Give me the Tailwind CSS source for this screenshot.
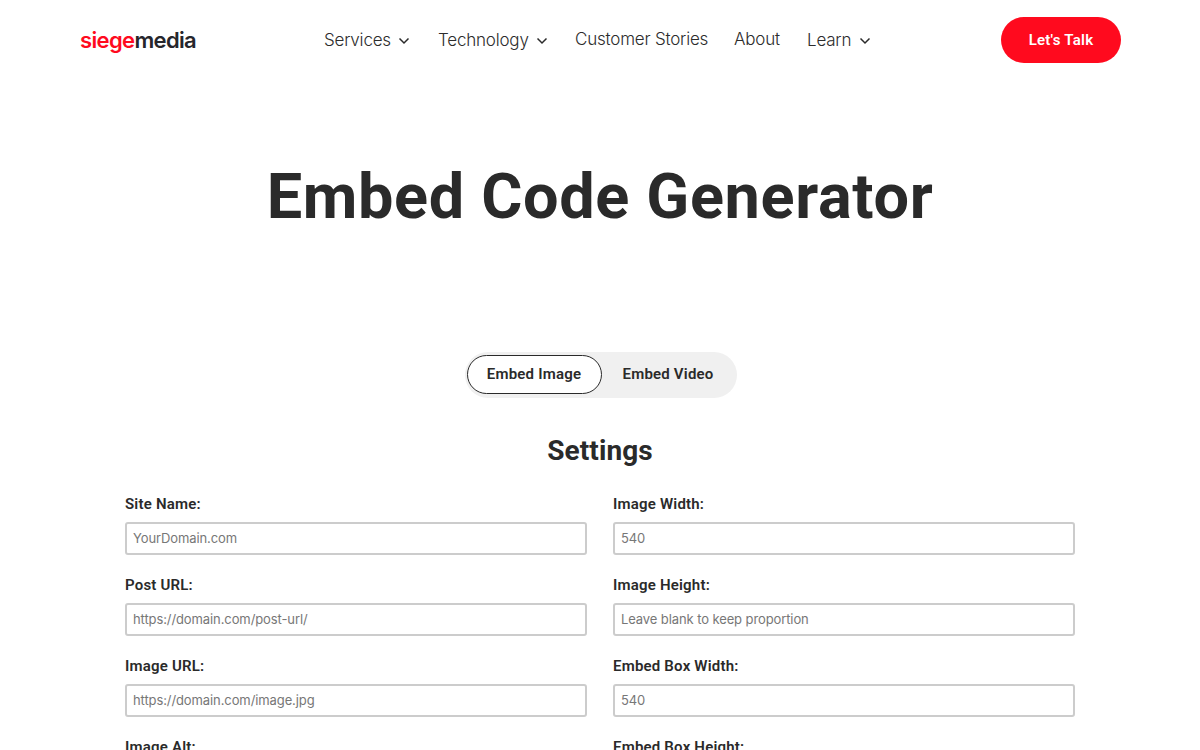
<!DOCTYPE html>
<html lang="en">
<head>
<meta charset="utf-8">
<title>Embed Code Generator</title>
<script src="https://cdn.jsdelivr.net/npm/@tailwindcss/browser@4"></script>
</head>
<body class="bg-white text-[#2a2a2a] font-['Roboto',sans-serif] h-[750px] overflow-hidden">

<!-- header -->
<header class="flex items-center h-[80px] pl-[80px] pr-[79px] font-['Inter',sans-serif]">
  <a class="w-[244px] text-[22px] font-semibold tracking-[-0.65px] leading-none"><span class="text-[#ff0a1e]">siege</span><span class="text-[#26262b]">media</span></a>
  <nav class="flex items-center text-[17px] font-light text-[#2c2c2c] tracking-[-0.2px] mt-[2px]">
    <a class="flex items-center w-[114px]">Services
      <svg class="ml-[7px] w-[12px] h-[8px]" viewBox="0 0 12 8" fill="none" stroke="#2a2a2a" stroke-width="1.5"><path d="M1.5 1.5 6 6l4.500-4.500"/></svg>
    </a>
    <a class="flex items-center w-[137px]">Technology
      <svg class="ml-[7px] w-[12px] h-[8px]" viewBox="0 0 12 8" fill="none" stroke="#2a2a2a" stroke-width="1.5"><path d="M1.5 1.5 6 6l4.500-4.500"/></svg>
    </a>
    <a class="w-[159px] -mt-[2px]">Customer Stories</a>
    <a class="w-[73px] -mt-[2px]">About</a>
    <a class="flex items-center">Learn
      <svg class="ml-[8px] w-[12px] h-[8px]" viewBox="0 0 12 8" fill="none" stroke="#2a2a2a" stroke-width="1.5"><path d="M1.5 1.5 6 6l4.500-4.500"/></svg>
    </a>
  </nav>
  <a class="ml-auto w-[120px] h-[46px] flex items-center justify-center rounded-full bg-[#ff0a1e] text-white text-[15px] font-semibold font-['Roboto',sans-serif] tracking-[0.25px]">Let's Talk</a>
</header>

<main>
  <h1 class="mt-[77px] text-center text-[63px] leading-[80px] font-bold text-[#2a2a2a] tracking-[0.65px]">Embed Code Generator</h1>

  <!-- tabs -->
  <div class="mt-[115px] flex justify-center">
    <div class="flex items-center w-[272px] h-[46px] rounded-full bg-[#f0f0f0] pl-[2px] ml-[1px] text-[15px] font-semibold">
      <button class="w-[135px] h-[39px] rounded-full bg-white border border-[#2a2a2a] tracking-[0.2px] -mt-[1px]">Embed Image</button>
      <button class="ml-[21px] -mt-[2px] tracking-[0.2px]">Embed Video</button>
    </div>
  </div>

  <h2 class="mt-[35px] text-center text-[28px] leading-[36px] font-bold tracking-[0.1px]">Settings</h2>

  <!-- form -->
  <form class="mt-[25px] mx-[125px] grid grid-cols-2 gap-x-[26px] gap-y-[20px]">
    <label class="block">
      <span class="block text-[15px] leading-[20px] font-semibold tracking-[0.2px]">Site Name:</span>
      <input class="mt-[8px] w-full h-[33px] pl-[6px] pr-[6px] pb-[2px] border-2 border-[#cccccc] rounded-[3px] text-[13px] tracking-[-0.1px] font-['Inter',sans-serif] placeholder:text-[#777777]" placeholder="YourDomain.com">
    </label>
    <label class="block">
      <span class="block text-[15px] leading-[20px] font-semibold tracking-[0.2px]">Image Width:</span>
      <input class="mt-[8px] w-full h-[33px] pl-[6px] pr-[6px] pb-[2px] border-2 border-[#cccccc] rounded-[3px] text-[13px] tracking-[-0.1px] font-['Inter',sans-serif] placeholder:text-[#777777]" placeholder="540">
    </label>
    <label class="block">
      <span class="block text-[15px] leading-[20px] font-semibold tracking-[0.2px]">Post URL:</span>
      <input class="mt-[8px] w-full h-[33px] pl-[6px] pr-[6px] pb-[2px] border-2 border-[#cccccc] rounded-[3px] text-[13px] tracking-[-0.1px] font-['Inter',sans-serif] placeholder:text-[#777777]" placeholder="https://domain.com/post-url/">
    </label>
    <label class="block">
      <span class="block text-[15px] leading-[20px] font-semibold tracking-[0.2px]">Image Height:</span>
      <input class="mt-[8px] w-full h-[33px] pl-[6px] pr-[6px] pb-[2px] border-2 border-[#cccccc] rounded-[3px] text-[13px] tracking-[-0.1px] font-['Inter',sans-serif] placeholder:text-[#777777]" placeholder="Leave blank to keep proportion">
    </label>
    <label class="block">
      <span class="block text-[15px] leading-[20px] font-semibold tracking-[0.2px]">Image URL:</span>
      <input class="mt-[8px] w-full h-[33px] pl-[6px] pr-[6px] pb-[2px] border-2 border-[#cccccc] rounded-[3px] text-[13px] tracking-[-0.1px] font-['Inter',sans-serif] placeholder:text-[#777777]" placeholder="https://domain.com/image.jpg">
    </label>
    <label class="block">
      <span class="block text-[15px] leading-[20px] font-semibold tracking-[0.2px]">Embed Box Width:</span>
      <input class="mt-[8px] w-full h-[33px] pl-[6px] pr-[6px] pb-[2px] border-2 border-[#cccccc] rounded-[3px] text-[13px] tracking-[-0.1px] font-['Inter',sans-serif] placeholder:text-[#777777]" placeholder="540">
    </label>
    <label class="block">
      <span class="block text-[15px] leading-[20px] font-semibold tracking-[0.2px]">Image Alt:</span>
      <input class="mt-[8px] w-full h-[33px] pl-[6px] pr-[6px] pb-[2px] border-2 border-[#cccccc] rounded-[3px] text-[13px] tracking-[-0.1px] font-['Inter',sans-serif] placeholder:text-[#777777]">
    </label>
    <label class="block">
      <span class="block text-[15px] leading-[20px] font-semibold tracking-[0.2px]">Embed Box Height:</span>
      <input class="mt-[8px] w-full h-[33px] pl-[6px] pr-[6px] pb-[2px] border-2 border-[#cccccc] rounded-[3px] text-[13px] tracking-[-0.1px] font-['Inter',sans-serif] placeholder:text-[#777777]">
    </label>
  </form>
</main>
</body>
</html>
